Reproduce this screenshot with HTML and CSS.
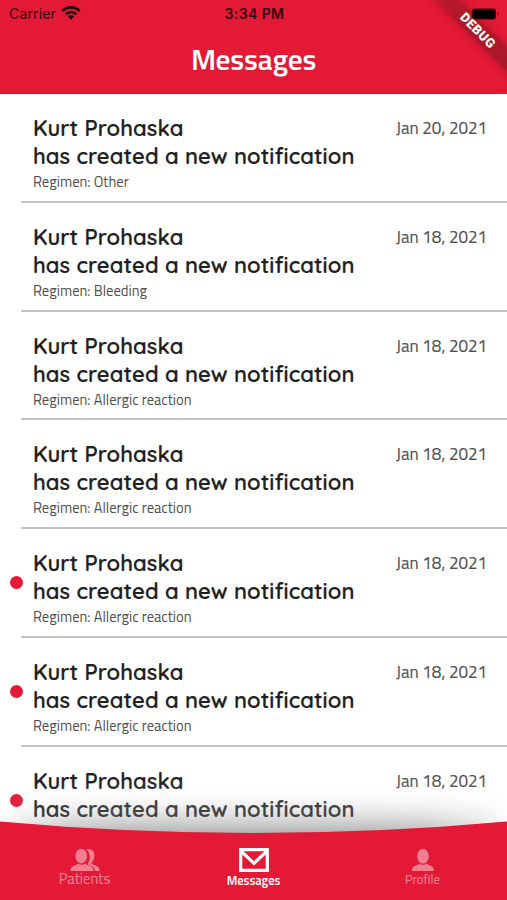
FILE: index.html
```html
<!DOCTYPE html>
<html lang="en">
<head>
<meta charset="utf-8">
<title>Messages</title>
<link rel="stylesheet" href="styles.css">
</head>
<body>
<div class="app">
  <header class="header">
    <div class="status">
      <div class="carrier"><span>Carrier</span>
        <svg width="20" height="16" viewBox="0 0 20 16"><g fill="none" stroke="#23030a" stroke-width="2.7"><path d="M1.4 6.1C6.2 1.1 13.8 1.1 18.6 6.1"/><path d="M4.6 9.4C7.6 6.3 12.4 6.3 15.4 9.4"/></g><path fill="#23030a" d="M6.8 11.3Q10 8.6 13.2 11.3L10 14.7Z"/></svg>
      </div>
      <time class="clock">3:34 PM</time>
      <svg class="battery" width="29" height="13" viewBox="0 0 29 13"><rect x="1" y=".5" width="24" height="11" rx="3" fill="#43040d"/><rect x="2.5" y="1.5" width="21" height="9" rx="1.8"/><path d="M26.4 4.2Q28.4 6 26.4 7.8Z" fill="#43040d"/></svg>
    </div>
    <h1 class="title"><span>Messages</span></h1>
    <div class="debug">DEBUG</div>
  </header>
  <main class="list">
    <article class="row"><div class="text"><h2>Kurt Prohaska</h2><p class="event">has created a new notification</p><p class="regimen">Regimen: Other</p></div><time class="date">Jan 20, 2021</time></article>
    <article class="row"><div class="text"><h2>Kurt Prohaska</h2><p class="event">has created a new notification</p><p class="regimen">Regimen: Bleeding</p></div><time class="date">Jan 18, 2021</time></article>
    <article class="row"><div class="text"><h2>Kurt Prohaska</h2><p class="event">has created a new notification</p><p class="regimen">Regimen: Allergic reaction</p></div><time class="date">Jan 18, 2021</time></article>
    <article class="row"><div class="text"><h2>Kurt Prohaska</h2><p class="event">has created a new notification</p><p class="regimen">Regimen: Allergic reaction</p></div><time class="date">Jan 18, 2021</time></article>
    <article class="row unread"><div class="text"><h2>Kurt Prohaska</h2><p class="event">has created a new notification</p><p class="regimen">Regimen: Allergic reaction</p></div><time class="date">Jan 18, 2021</time></article>
    <article class="row unread"><div class="text"><h2>Kurt Prohaska</h2><p class="event">has created a new notification</p><p class="regimen">Regimen: Allergic reaction</p></div><time class="date">Jan 18, 2021</time></article>
    <article class="row unread"><div class="text"><h2>Kurt Prohaska</h2><p class="event">has created a new notification</p></div><time class="date">Jan 18, 2021</time></article>
  </main>
  <footer class="dock">
    <svg class="curve" width="507" height="130" viewBox="0 0 507 130">
      <defs>
        <linearGradient id="shade" x1="0" y1="0" x2="0" y2="1"><stop offset="0" stop-color="#fff" stop-opacity="0"/><stop offset=".35" stop-color="#ddd" stop-opacity=".14"/><stop offset=".68" stop-color="#909090" stop-opacity=".3"/><stop offset="1" stop-color="#707070" stop-opacity=".56"/></linearGradient>
        <linearGradient id="ends"><stop offset="0" stop-color="#fff" stop-opacity=".1"/><stop offset=".06" stop-color="#fff" stop-opacity=".5"/><stop offset=".15" stop-color="#fff" stop-opacity=".88"/><stop offset=".25" stop-color="#fff"/><stop offset=".75" stop-color="#fff"/><stop offset=".85" stop-color="#fff" stop-opacity=".88"/><stop offset=".94" stop-color="#fff" stop-opacity=".5"/><stop offset="1" stop-color="#fff" stop-opacity=".1"/></linearGradient>
        <mask id="fade"><rect width="507" height="130" fill="url(#ends)"/></mask>
      </defs>
      <rect y="8" width="507" height="56" fill="url(#shade)" mask="url(#fade)"/>
      <path d="M0 51.5Q253.5 74.5 507 51.5V130H0Z" fill="#e31936"/>
    </svg>
    <nav class="tabs">
      <a class="tab patients"><svg width="30" height="24" viewBox="0 0 30 24"><g fill="currentColor"><path d="M16.2 1.2C21 .1 24.4 2.6 24.4 7.4c0 3.5-1.3 5.8-3.1 7 .3 1.6 1.5 2.2 4.2 3 2.6.8 4 2.4 4.2 5.6h-4.4c-.8-3-2.8-4.7-6-5.7-.9-.4-1.3-.9-1.4-1.7 2.6-4 2.9-10.8-1.7-14.4Z"/><ellipse cx="11.7" cy="8.1" rx="6.5" ry="8" fill="#e31936"/><ellipse cx="11.2" cy="8.1" rx="5.8" ry="7.4"/><path d="M.5 23c0-3.3 1.5-4.7 4.7-5.7 1.4-.4 2.2-.9 2.7-1.8 2.3 1.8 5.3 1.8 7.6 0 .6.9 1.5 1.4 2.9 1.8C21.7 18.4 23.5 20 23.5 23Z"/></g></svg><span>Patients</span></a>
      <a class="tab active"><svg width="30" height="24" viewBox="0 0 30 24"><path d="M1.7 1.7H28.3V22.3H1.7ZM2.5 3.5 15 15.3 27.5 3.5" fill="none" stroke="currentColor" stroke-width="3.2"/></svg><span>Messages</span></a>
      <a class="tab profile"><svg width="24" height="24" viewBox="0 0 24 24"><g fill="currentColor"><ellipse cx="12" cy="8.2" rx="5.8" ry="7.4"/><path d="M1 23c0-3.3 1.5-4.7 4.4-5.7 1.4-.4 2.3-.9 2.8-1.8 2.3 1.8 5.3 1.8 7.6 0 .5.9 1.4 1.4 2.8 1.8C21.5 18.3 23 20 23 23Z"/></g></svg><span>Profile</span></a>
    </nav>
  </footer>
</div>
</body>
</html>
```
FILE: styles.css
```css
* { box-sizing: border-box; }
body { margin: 0; background: #fff; }
h1, h2, p { margin: 0; }
.app { position: relative; width: 507px; height: 900px; overflow: hidden; display: flex; flex-direction: column; font-family: "Titillium Web", Roboto, sans-serif; }
.header { position: relative; height: 93.5px; flex: none; background: #e31936; overflow: hidden; }
.status { position: relative; z-index: 1; display: grid; grid-template-columns: 1fr auto 1fr; height: 28px; align-items: center; padding: 0 7px 0 9px; font: 14px/28px Inter, sans-serif; color: #35030c; }
.carrier { display: flex; align-items: center; gap: 5px; letter-spacing: .15px; }
.carrier svg { margin-top: -2px; }
.clock { font-weight: 600; letter-spacing: .4px; }
.battery { justify-self: end; }
.title { margin-top: 12px; text-align: center; color: #fff; font-size: 29.5px; line-height: 38px; font-weight: 600; letter-spacing: -.2px; }
.debug { position: absolute; z-index: 0; left: 418px; top: 22px; width: 120px; height: 17px; transform: rotate(45deg); background: linear-gradient(90deg, rgba(165,24,38,.55), #b0182a 35%, #a81727); box-shadow: 0 0 8px rgba(75,0,10,.3); color: #fff; font: 900 13px/17px Roboto, sans-serif; text-align: center; letter-spacing: .5px; }
.list { flex: none; margin-top: .5px; }
.row { position: relative; display: flex; justify-content: space-between; height: 108.75px; margin-left: 21px; padding: 20px 20px 0 12px; background: linear-gradient(#c5c5c5, #c5c5c5) 0 100% / 100% 2px no-repeat; }
h2, .event { font: 600 22px/28px Quicksand, Inter, sans-serif; font-feature-settings: "cv11"; color: #202020; white-space: nowrap; letter-spacing: .1px; -webkit-text-stroke: .2px #202020; }
.regimen { font-size: 14.6px; line-height: 24px; color: #505050; }
.date { font-size: 17px; line-height: 28px; color: #505050; white-space: nowrap; -webkit-text-stroke: .15px #505050; }
.unread::before { content: ""; position: absolute; left: -11px; top: 47px; width: 13px; height: 13px; border-radius: 50%; background: #e31936; }
.dock { position: absolute; left: 0; bottom: 0; width: 507px; height: 130px; }
.curve { display: block; }
.tabs { position: absolute; left: 0; bottom: 0; width: 507px; height: 53px; display: grid; grid-template-columns: repeat(3, 1fr); }
.tab { display: flex; flex-direction: column; align-items: center; color: #f17f90; font-size: 14.7px; line-height: 15px; padding-top: 1px; -webkit-text-stroke: .15px currentColor; }
.active { color: #fff; font-size: 12.5px; font-weight: 600; -webkit-text-stroke: 0; }
.profile { font-size: 12.8px; }
.patients span { margin-top: -1px; }
.active span { margin-top: 1px; }
```
